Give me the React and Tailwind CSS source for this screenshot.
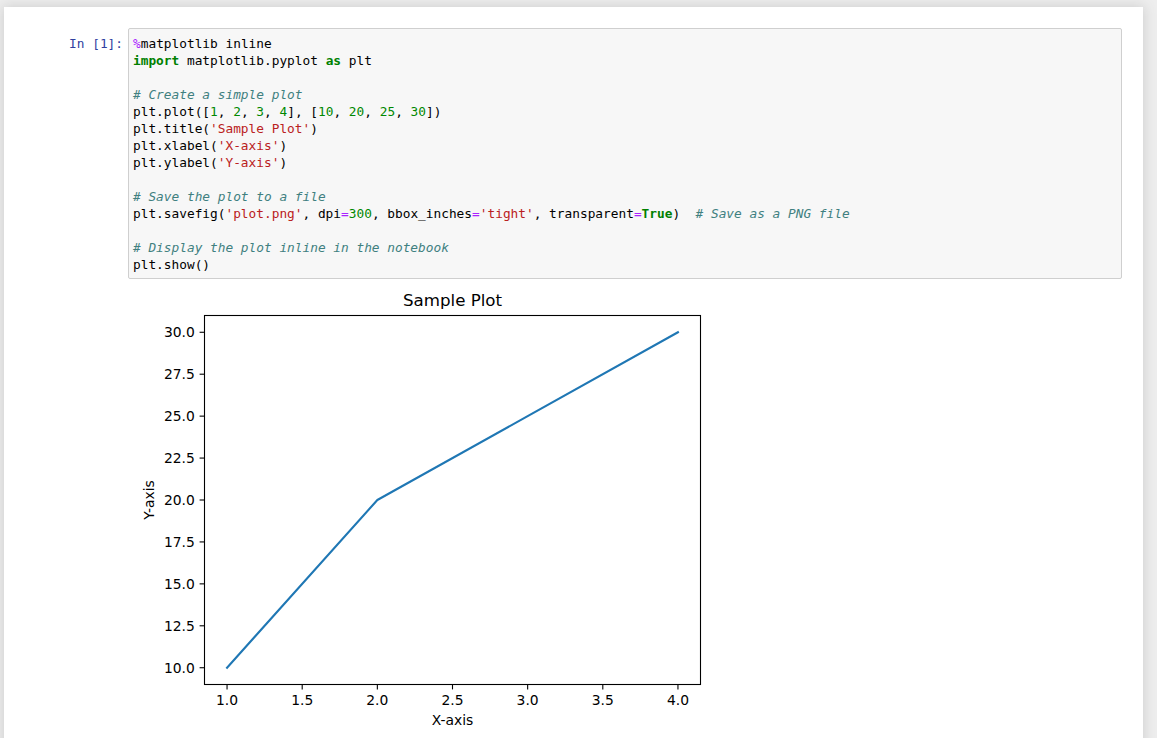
import React from "react";

const K = ({ children }) => <span className="text-[#008000] font-bold">{children}</span>;
const N = ({ children }) => <span className="text-[#008800]">{children}</span>;
const S = ({ children }) => <span className="text-[#BA2121]">{children}</span>;
const O = ({ children }) => <span className="text-[#AA22FF]">{children}</span>;
const C = ({ children }) => <span className="text-[#408080] italic">{children}</span>;

function Plot() {
  const xPx = (v) => 76.5 + ((v - 0.85) / 3.3) * 496;
  const yPx = (v) => 401.5 - ((v - 9) / 22) * 369;
  const xt = [1.0, 1.5, 2.0, 2.5, 3.0, 3.5, 4.0];
  const yt = [10, 12.5, 15, 17.5, 20, 22.5, 25, 27.5, 30];
  const pts = [
    [1, 10],
    [2, 20],
    [3, 25],
    [4, 30],
  ]
    .map(([x, y]) => `${xPx(x)},${yPx(y)}`)
    .join(" ");
  const ff = "'DejaVu Sans', sans-serif";
  return (
    <svg width="600" height="460" viewBox="0 0 600 460" className="block shrink-0">
      <text x="324.5" y="23" textAnchor="middle" fontFamily={ff} fontSize="16.67" fill="#000">
        Sample Plot
      </text>
      <polyline points={pts} fill="none" stroke="#1f77b4" strokeWidth="2.08" strokeLinecap="square" strokeLinejoin="round" />
      <rect x="76.5" y="32.5" width="496" height="369" fill="none" stroke="#000" strokeWidth="1.1" />
      {xt.map((v) => (
        <g key={"x" + v}>
          <line x1={xPx(v)} x2={xPx(v)} y1="401.5" y2="406.4" stroke="#000" strokeWidth="1.1" />
          <text x={xPx(v)} y="421.8" textAnchor="middle" fontFamily={ff} fontSize="13.89" fill="#000">
            {v.toFixed(1)}
          </text>
        </g>
      ))}
      {yt.map((v) => (
        <g key={"y" + v}>
          <line x1="71.6" x2="76.5" y1={yPx(v)} y2={yPx(v)} stroke="#000" strokeWidth="1.1" />
          <text x="66.8" y={yPx(v) + 5.05} textAnchor="end" fontFamily={ff} fontSize="13.89" fill="#000">
            {v.toFixed(1)}
          </text>
        </g>
      ))}
      <text x="324.5" y="441.5" textAnchor="middle" fontFamily={ff} fontSize="13.89" fill="#000">
        X-axis
      </text>
      <text transform="translate(25.5,217) rotate(-90)" textAnchor="middle" fontFamily={ff} fontSize="13.89" fill="#000">
        Y-axis
      </text>
    </svg>
  );
}

export default function App() {
  const mono = "font-['DejaVu_Sans_Mono',monospace] text-[12.8px] leading-[17px]";
  return (
    <div className="h-[738px] overflow-hidden bg-[#eeeeee] pt-[7px] pl-[4px]">
      <div className="w-[1139px] h-[760px] bg-white shadow-[0_0_12px_1px_rgba(87,87,87,0.2)] pt-[21px] pr-[21px]">
        <div className="flex">
          <div className={`w-[124px] shrink-0 text-right pr-[5px] pt-[7px] text-[#303F9F] ${mono}`}>In&nbsp;[1]:</div>
          <div className="flex-1 border border-[#cfcfcf] bg-[#f7f7f7] rounded-[2px] pt-[6px] pb-[5px] pl-[4px]">
            <pre className={`${mono} text-black whitespace-pre m-0`}>
              <O>%</O>matplotlib inline{"\n"}
              <K>import</K> matplotlib.pyplot <K>as</K> plt{"\n"}
              {"\n"}
              <C># Create a simple plot</C>{"\n"}
              plt.plot([<N>1</N>, <N>2</N>, <N>3</N>, <N>4</N>], [<N>10</N>, <N>20</N>, <N>25</N>, <N>30</N>]){"\n"}
              plt.title(<S>'Sample Plot'</S>){"\n"}
              plt.xlabel(<S>'X-axis'</S>){"\n"}
              plt.ylabel(<S>'Y-axis'</S>){"\n"}
              {"\n"}
              <C># Save the plot to a file</C>{"\n"}
              plt.savefig(<S>'plot.png'</S>, dpi<O>=</O><N>300</N>, bbox_inches<O>=</O><S>'tight'</S>, transparent<O>=</O><K>True</K>)  <C># Save as a PNG file</C>{"\n"}
              {"\n"}
              <C># Display the plot inline in the notebook</C>{"\n"}
              plt.show()
            </pre>
          </div>
        </div>
        <div className="flex mt-[4px]">
          <div className="w-[124px] shrink-0" />
          <Plot />
        </div>
      </div>
    </div>
  );
}
